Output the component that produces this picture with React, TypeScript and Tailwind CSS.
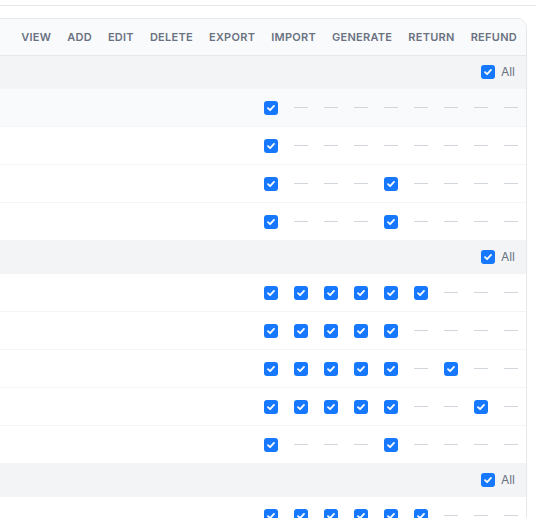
const headers = ["VIEW", "ADD", "EDIT", "DELETE", "EXPORT", "IMPORT", "GENERATE", "RETURN", "REFUND"];

type Group = { rows: number[][] };

const groups: Group[] = [
  {
    rows: [
      [1, 0, 0, 0, 0, 0, 0, 0, 0],
      [1, 0, 0, 0, 0, 0, 0, 0, 0],
      [1, 0, 0, 0, 1, 0, 0, 0, 0],
      [1, 0, 0, 0, 1, 0, 0, 0, 0],
    ],
  },
  {
    rows: [
      [1, 1, 1, 1, 1, 1, 0, 0, 0],
      [1, 1, 1, 1, 1, 0, 0, 0, 0],
      [1, 1, 1, 1, 1, 0, 1, 0, 0],
      [1, 1, 1, 1, 1, 0, 0, 1, 0],
      [1, 0, 0, 0, 1, 0, 0, 0, 0],
    ],
  },
  {
    rows: [[1, 1, 1, 1, 1, 1, 0, 0, 0]],
  },
];

function Check() {
  return (
    <span className="flex h-[14px] w-[14px] items-center justify-center rounded-[3px] bg-[#1677ff]">
      <svg width="10" height="10" viewBox="0 0 10 10" fill="none">
        <path d="M2 5.2 4.1 7.2 8 2.9" stroke="white" strokeWidth="1.8" strokeLinecap="round" strokeLinejoin="round" />
      </svg>
    </span>
  );
}

function Cell({ on }: { on: number }) {
  return (
    <div className="flex w-[30px] items-center justify-center">
      {on ? <Check /> : <span className="h-px w-[14px] bg-gray-300" />}
    </div>
  );
}

export default function App() {
  return (
    <div className="h-[518px] w-[536px] overflow-hidden bg-white font-['Inter',sans-serif]">
      <div className="h-[6px] border-b border-gray-200" />
      <div className="mt-3 pr-[9px]">
        <div className="-ml-3 rounded-tr-[10px] border border-gray-200">
          {/* header */}
          <div className="flex h-[37px] items-center justify-end rounded-tr-[10px] border-b border-gray-200 bg-[#f9fafb] pr-[1px]">
            {headers.map((h) => (
              <span key={h} className="px-2 text-[11px] font-semibold tracking-wide text-gray-500">
                {h}
              </span>
            ))}
          </div>
          {groups.map((g, gi) => (
            <div key={gi}>
              <div className="flex h-[33px] items-center justify-end gap-1.5 border-b border-gray-100 bg-gray-100 pr-[11px]">
                <Check />
                <span className="text-xs text-gray-500">All</span>
              </div>
              {g.rows.map((r, ri) => (
                <div
                  key={ri}
                  className={`flex h-[38px] items-center justify-end border-b border-gray-100 ${
                    gi === 0 && ri === 0 ? "bg-[#f9fafb]" : "bg-white"
                  }`}
                >
                  {r.map((v, ci) => (
                    <Cell key={ci} on={v} />
                  ))}
                </div>
              ))}
            </div>
          ))}
        </div>
      </div>
    </div>
  );
}
